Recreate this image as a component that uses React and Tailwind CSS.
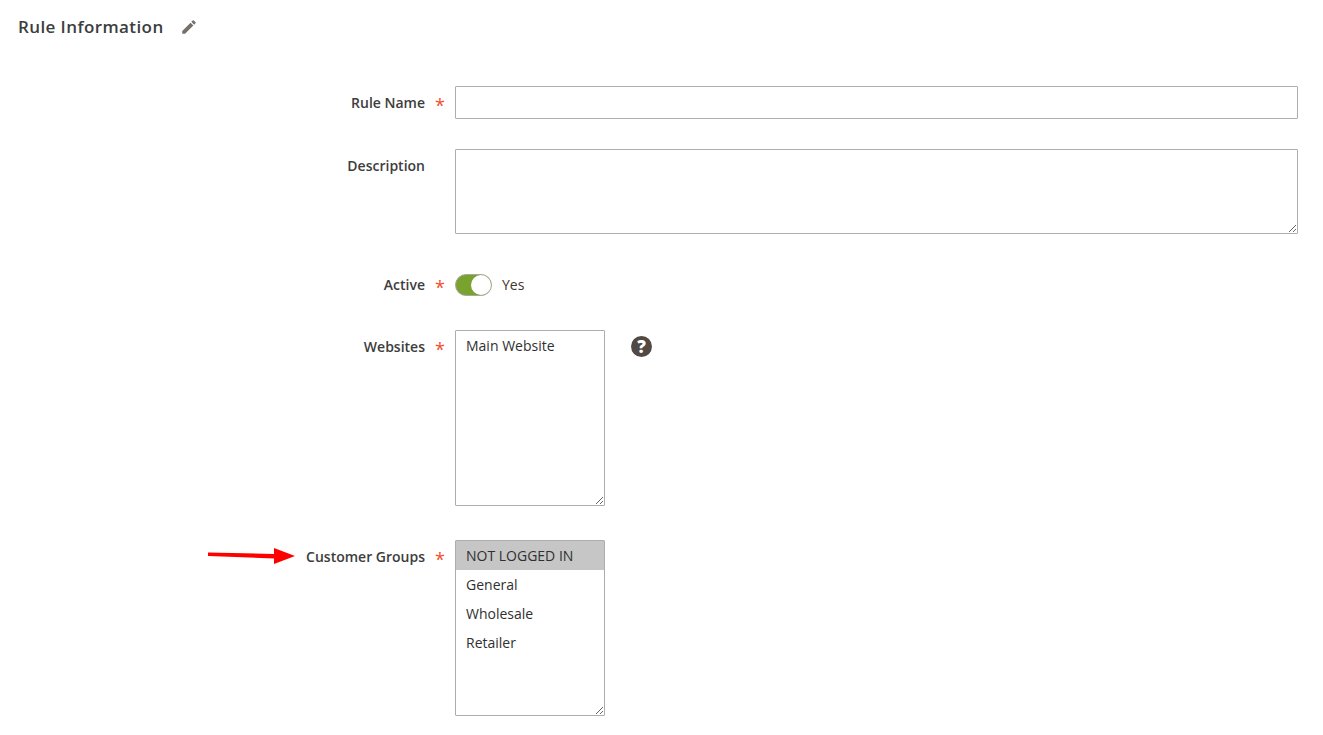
import React from 'react';
import { MdEdit } from 'react-icons/md';

const Field = ({ label, required, className = '', labelClass = 'pt-[7px]', children }) => (
  <div className={`flex items-start ${className}`}>
    <div className={`w-[425px] text-right text-[14px] leading-[19px] font-semibold text-[#3d3d3d] ${labelClass}`}>{label}</div>
    <div className={`w-[30px] pl-[10px] text-[18px] leading-[19px] font-normal text-[#ef4f2a] ${labelClass}`}>{required ? <span className="relative top-[3px]">*</span> : null}</div>
    {children}
  </div>
);

const ListBox = ({ options, selected }) => (
  <div className="w-[150px] h-[176px] border border-[#adadad] rounded-[1px] overflow-auto resize bg-white text-[14px] text-[#303030]">
    {options.map((o) => (
      <div key={o} className={`h-[29px] px-[10px] leading-[29px] ${o === selected ? 'bg-[#c6c6c6]' : ''}`}>{o}</div>
    ))}
  </div>
);

export default function App() {
  return (
    <div className="relative w-[1323px] h-[735px] overflow-hidden bg-white font-['Open_Sans',sans-serif]">
      <div className="flex items-center h-[54px] pl-[18px] gap-[16px]">
        <h2 className="text-[17px] leading-[24px] font-semibold tracking-[0.4px] text-[#3d3d3d]">Rule Information</h2>
        <MdEdit size={18} className="text-[#75706a]" />
      </div>

      <div className="pt-[32px]">
        <Field label="Rule Name" required>
          <input className="w-[843px] h-[33px] border border-[#adadad] rounded-[1px] outline-none" />
        </Field>

        <Field label="Description" className="mt-[30px]">
          <textarea className="w-[843px] h-[85px] border border-[#adadad] rounded-[1px] outline-none resize" />
        </Field>

        <Field label="Active" required className="mt-[40px]" labelClass="pt-[1px]">
          <div className="flex items-center gap-[10px]">
            <div className="flex justify-end w-[37px] h-[22px] rounded-full bg-[#79a22e] border border-[#aaa6a0]">
              <div className="w-[20px] h-[20px] rounded-full bg-white" />
            </div>
            <span className="text-[14px] leading-[19px] -mt-[1px] text-[#41362f]">Yes</span>
          </div>
        </Field>

        <Field label="Websites" required className="mt-[34px]">
          <ListBox options={['Main Website']} />
          <div className="ml-[26px] mt-[6px] flex items-center justify-center w-[21px] h-[21px] rounded-full bg-[#514943] text-white text-[17px] font-extrabold leading-none">?</div>
        </Field>

        <Field label="Customer Groups" required className="mt-[34px]">
          <ListBox options={['NOT LOGGED IN', 'General', 'Wholesale', 'Retailer']} selected="NOT LOGGED IN" />
        </Field>
      </div>

      {/* annotation arrow */}
      <svg className="absolute left-[205px] top-[545px]" width="92" height="22" viewBox="0 0 92 22">
        <path d="M3 7.500 L69 9 L69 3 L90 11 L69 19 L69 13.500 L3 11 Z" fill="#fe0000" />
      </svg>
    </div>
  );
}
